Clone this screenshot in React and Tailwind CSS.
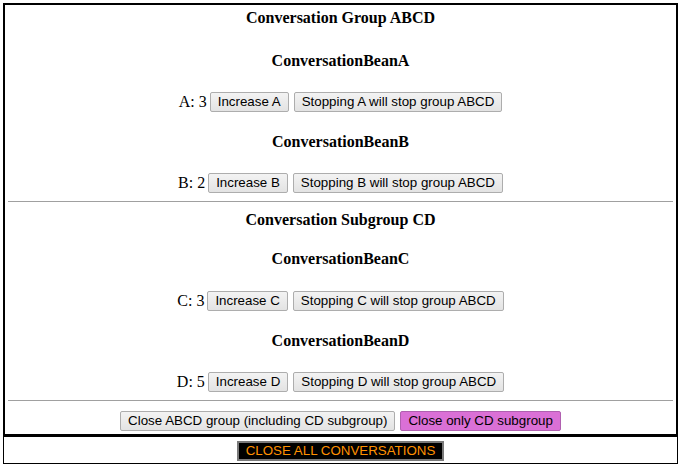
import React, { useState } from 'react';

const serif = { fontFamily: '"Liberation Serif", "Times New Roman", serif' };

function Btn({ children, className = '' }) {
  return (
    <button
      className={`h-[20px] px-[7px] border border-[#adadad] rounded-[2px] bg-gradient-to-b from-[#f3f3f3] to-[#e3e3e3] text-[13.33px] leading-none text-black ${className}`}
      style={{ fontFamily: '"Liberation Sans", Arial, sans-serif' }}
    >
      {children}
    </button>
  );
}

function Heading({ children, className = '' }) {
  return (
    <div className={`h-[20px] flex items-center justify-center text-[16px] font-bold text-black ${className}`} style={serif}>
      {children}
    </div>
  );
}

function BeanRow({ letter, value, className = '' }) {
  return (
    <div className={`h-[20px] flex items-center justify-center gap-[4px] ${className}`}>
      <span className="text-[16px] text-black mr-[-1px]" style={serif}>
        {letter}: {value}
      </span>
      <Btn>Increase {letter}</Btn>
      <Btn className="ml-[1px]">Stopping {letter} will stop group ABCD</Btn>
    </div>
  );
}

export default function App() {
  const [counts] = useState({ A: 3, B: 2, C: 3, D: 5 });

  return (
    <div className="w-[682px] h-[468px] bg-white pt-[3px]">
      <div className="ml-[3px] w-[675px] border-2 border-black pb-[3px]">
        <Heading className="mt-[3px]">Conversation Group ABCD</Heading>

        <Heading className="mt-[23px]">ConversationBeanA</Heading>
        <BeanRow letter="A" value={counts.A} className="mt-[21px]" />

        <Heading className="mt-[20px]">ConversationBeanB</Heading>
        <BeanRow letter="B" value={counts.B} className="mt-[21px]" />

        <div className="mx-[3px] mt-[8px] border-t border-[#a0a0a0]" />

        <Heading className="mt-[8px]">Conversation Subgroup CD</Heading>

        <Heading className="mt-[19px]">ConversationBeanC</Heading>
        <BeanRow letter="C" value={counts.C} className="mt-[22px]" />

        <Heading className="mt-[20px]">ConversationBeanD</Heading>
        <BeanRow letter="D" value={counts.D} className="mt-[21px]" />

        <div className="mx-[3px] mt-[8px] border-t border-[#a0a0a0]" />

        <div className="mt-[10px] h-[20px] flex items-center justify-center gap-[5px]">
          <Btn>Close ABCD group (including CD subgroup)</Btn>
          <Btn className="!bg-none bg-[#da70d6] border-[#b060b0]">Close only CD subgroup</Btn>
        </div>
      </div>

      <div className="ml-[3px] w-[675px] border border-black h-[28px] flex justify-center pt-[4px]">
        <button
          className="h-[20px] px-[7px] border-2 border-[#7a7a7a] bg-black text-[#ff9100] text-[13.33px] leading-none"
          style={{ fontFamily: '"Liberation Sans", Arial, sans-serif' }}
        >
          CLOSE ALL CONVERSATIONS
        </button>
      </div>
    </div>
  );
}
